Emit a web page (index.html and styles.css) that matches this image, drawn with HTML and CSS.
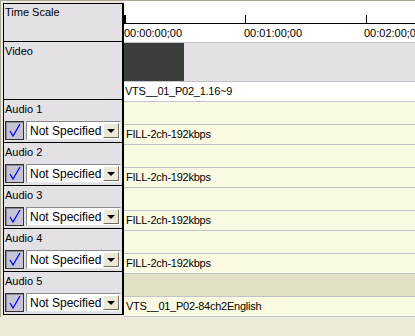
FILE: index.html
```html
<!DOCTYPE html>
<html>
<head>
  <title>Timeline</title>
  <link rel="stylesheet" href="styles.css">
</head>
<body>
  <div class="frame">
    <div class="panel">
      <div class="prow ts">Time Scale</div>
      <div class="prow video">Video</div>

      <div class="prow audio">
        <div class="alabel">Audio 1</div>
        <div class="ctrl">
          <span class="check"><svg width="17" height="17" viewBox="0 0 17 17"><path d="M4 9 L7 14 L14 2" fill="none" stroke="#0000ff" stroke-width="1.3"/></svg></span>
          <span class="combo"><span class="ctext">Not Specified</span><span class="drop"></span></span>
        </div>
      </div>
      <div class="prow audio">
        <div class="alabel">Audio 2</div>
        <div class="ctrl">
          <span class="check"><svg width="17" height="17" viewBox="0 0 17 17"><path d="M4 9 L7 14 L14 2" fill="none" stroke="#0000ff" stroke-width="1.3"/></svg></span>
          <span class="combo"><span class="ctext">Not Specified</span><span class="drop"></span></span>
        </div>
      </div>
      <div class="prow audio">
        <div class="alabel">Audio 3</div>
        <div class="ctrl">
          <span class="check"><svg width="17" height="17" viewBox="0 0 17 17"><path d="M4 9 L7 14 L14 2" fill="none" stroke="#0000ff" stroke-width="1.3"/></svg></span>
          <span class="combo"><span class="ctext">Not Specified</span><span class="drop"></span></span>
        </div>
      </div>
      <div class="prow audio">
        <div class="alabel">Audio 4</div>
        <div class="ctrl">
          <span class="check"><svg width="17" height="17" viewBox="0 0 17 17"><path d="M4 9 L7 14 L14 2" fill="none" stroke="#0000ff" stroke-width="1.3"/></svg></span>
          <span class="combo"><span class="ctext">Not Specified</span><span class="drop"></span></span>
        </div>
      </div>
      <div class="prow audio">
        <div class="alabel">Audio 5</div>
        <div class="ctrl">
          <span class="check"><svg width="17" height="17" viewBox="0 0 17 17"><path d="M4 9 L7 14 L14 2" fill="none" stroke="#0000ff" stroke-width="1.3"/></svg></span>
          <span class="combo"><span class="ctext">Not Specified</span><span class="drop"></span></span>
        </div>
      </div>
    </div>

    <div class="tracks">
      <div class="ruler">
        <div class="ticks">
          <span class="seg"></span><span class="seg"></span><span class="seg"></span>
        </div>
        <div class="times">
          <span class="tm">00:00:00;00</span><span class="tm">00:01:00;00</span><span class="tm">00:02:00;00</span>
        </div>
      </div>
      <div class="vtrack"><div class="vclip"></div></div>
      <div class="clip white">VTS__01_P02_1.16~9</div>

      <div class="empty"></div>
      <div class="clip">FILL-2ch-192kbps</div>
      <div class="empty"></div>
      <div class="clip">FILL-2ch-192kbps</div>
      <div class="empty"></div>
      <div class="clip">FILL-2ch-192kbps</div>
      <div class="empty"></div>
      <div class="clip">FILL-2ch-192kbps</div>
      <div class="empty sel"></div>
      <div class="clip">VTS__01_P02-84ch2English</div>
    </div>
  </div>
</body>
</html>
```

FILE: styles.css
```css
/* timeline panel, XP look */
body {
  margin: 0;
  background: #ece9d8;
  font-family: "Liberation Sans", Arial, sans-serif;
  font-size: 11px;
  color: #000;
  overflow: hidden;
}

.frame {
  display: flex;
  align-items: flex-start;
  border-top: 1px solid #aca899;
  border-left: 1px solid #aca899;
}

/* left side */
.panel {
  width: 118px;
  margin-top: 2px;
  margin-left: 2px;
  border: 1px solid #000;
  border-right-width: 2px;
  border-bottom: none;
  background: #e3e1e6;
}

.prow {
  border-bottom: 1px solid #000;
  padding-left: 1px;
}

.ts {
  height: 38px;
  padding-top: 2px;
  box-sizing: border-box;
}

.video {
  height: 58px;
  padding-top: 3px;
  box-sizing: border-box;
}

.audio {
  height: 42px;
}

.alabel {
  height: 21px;
  padding-top: 1px;
  box-sizing: border-box;
  line-height: 16px;
}

.ctrl {
  display: flex;
  gap: 2px;
}

.check {
  width: 17px;
  height: 17px;
  border: 1px solid #333;
  background: #c6c5d3;
  box-shadow: inset 1px 1px #8a8a96;
}

.check svg {
  display: block;
}

.combo {
  display: flex;
  align-items: center;
  width: 95px;
  height: 19px;
  box-sizing: border-box;
  background: #fff;
  border: 1px solid;
  border-color: #8c8c8c #e8e8e8 #e8e8e8 #8c8c8c;
  padding: 1px;
}

.ctext {
  flex: 1;
  padding-left: 2px;
  font-size: 12px;
}

.drop {
  width: 16px;
  height: 15px;
  box-sizing: border-box;
  background: #ece9d8;
  border: 1px solid;
  border-color: #fff #6f6d62 #6f6d62 #fff;
  position: relative;
}

.drop::after {
  content: "";
  position: absolute;
  left: 3px;
  top: 5px;
  border-left: 4px solid transparent;
  border-right: 4px solid transparent;
  border-top: 4px solid #000;
}

/* right side */
.tracks {
  flex: 1;
  min-width: 0;
  overflow: hidden;
}

.ruler {
  background: #fff;
  border-bottom: 1px solid #c3c3cb;
  padding-top: 14px;
  height: 27px;
}

.ticks {
  display: flex;
  height: 8px;
  border-bottom: 1px solid #000;
}

.seg {
  flex: none;
  width: 120px;
  border-left: 1px solid #000;
}

.seg:first-child {
  border-left-width: 2px;
  width: 119px;
}

.times {
  display: flex;
  padding-top: 3px;
  white-space: nowrap;
}

.tm {
  flex: none;
  width: 120px;
}

.vtrack {
  height: 38px;
  background: #e3e1e6;
  border-bottom: 1px solid #c3c3cb;
}

.vclip {
  width: 60px;
  height: 38px;
  background: #3b3f3b;
}

.clip {
  height: 19px;
  line-height: 19px;
  padding-left: 2px;
  letter-spacing: -0.25px;
  background: #fbfbe3;
  border-bottom: 1px solid #c3c3cb;
  white-space: nowrap;
}

.clip.white {
  padding-left: 1px;
  background: #fff;
}

.empty {
  height: 22px;
  background: #fbfbe3;
  border-bottom: 1px solid #c3c3cb;
}

.empty.sel {
  background: #e3e1c5;
}
```
